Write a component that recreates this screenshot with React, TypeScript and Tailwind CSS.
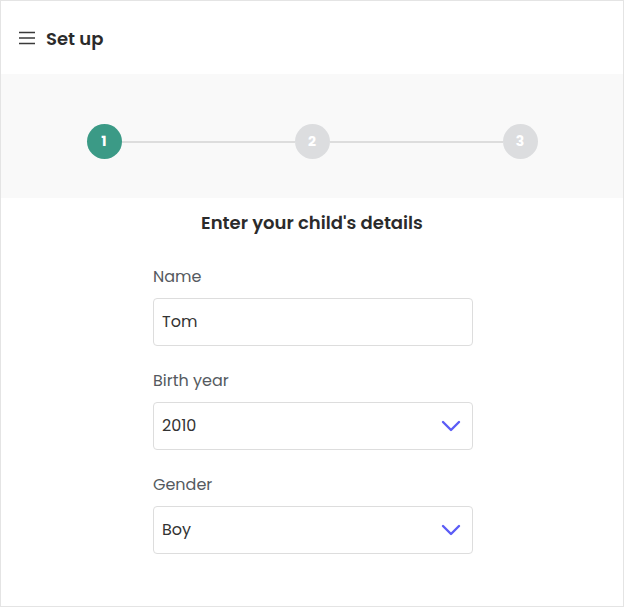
import React from 'react';

const font = { fontFamily: 'Poppins, Inter, "Noto Sans", sans-serif' };

const steps = [1, 2, 3];

function Chevron() {
  return (
    <svg width="20" height="12" viewBox="0 0 20 12" fill="none">
      <path d="M2 2l8 8 8-8" stroke="#5b5cf6" strokeWidth="2.4" strokeLinecap="round" strokeLinejoin="round" />
    </svg>
  );
}

function Field({ label, value, select }: { label: string; value: string; select?: boolean }) {
  return (
    <div className="mb-[24px] flex flex-col">
      <label className="mb-[10px] text-[16px] leading-[22px] text-[#555a60]">{label}</label>
      <div className="flex h-[48px] items-center justify-between rounded-[4px] border border-[#dddddd] bg-white pl-[8px] pr-[11px]">
        <span className="text-[16px] text-[#333]">{value}</span>
        {select && <Chevron />}
      </div>
    </div>
  );
}

export default function App() {
  return (
    <div className="h-[607px] w-[624px] border border-[#e4e4e4] bg-white" style={font}>
      {/* Header */}
      <div className="flex h-[73px] items-center gap-[11px] pl-[18px] pt-[1px]">
        <svg width="16" height="14" viewBox="0 0 16 14" fill="none">
          <path d="M0 1.5h16M0 7h16M0 12.5h16" stroke="#3a3a3a" strokeWidth="1.5" />
        </svg>
        <span className="text-[18px] font-semibold text-[#2b2b2b]">Set up</span>
      </div>

      {/* Stepper */}
      <div className="h-[124px] bg-[#f9f9f9] pt-[50px]">
        <div className="mx-auto flex w-[451px] items-center">
          {steps.map((s, i) => (
            <React.Fragment key={s}>
              <div
                className={`flex h-[35px] w-[35px] shrink-0 items-center justify-center rounded-full text-[14px] font-bold text-white ${
                  s === 1 ? 'bg-[#3b9a86]' : 'bg-[#dcdddf]'
                }`}
              >
                {s}
              </div>
              {i < steps.length - 1 && <div className="h-[2px] flex-1 bg-[#dddddd]" />}
            </React.Fragment>
          ))}
        </div>
      </div>

      {/* Form */}
      <div className="pt-[11px]">
        <h2 className="text-center text-[18px] font-semibold leading-[27px] text-[#2b2b2b]">
          Enter your child's details
        </h2>
        <div className="ml-[152px] mt-[30px] w-[320px]">
          <Field label="Name" value="Tom" />
          <Field label="Birth year" value="2010" select />
          <Field label="Gender" value="Boy" select />
        </div>
      </div>
    </div>
  );
}
